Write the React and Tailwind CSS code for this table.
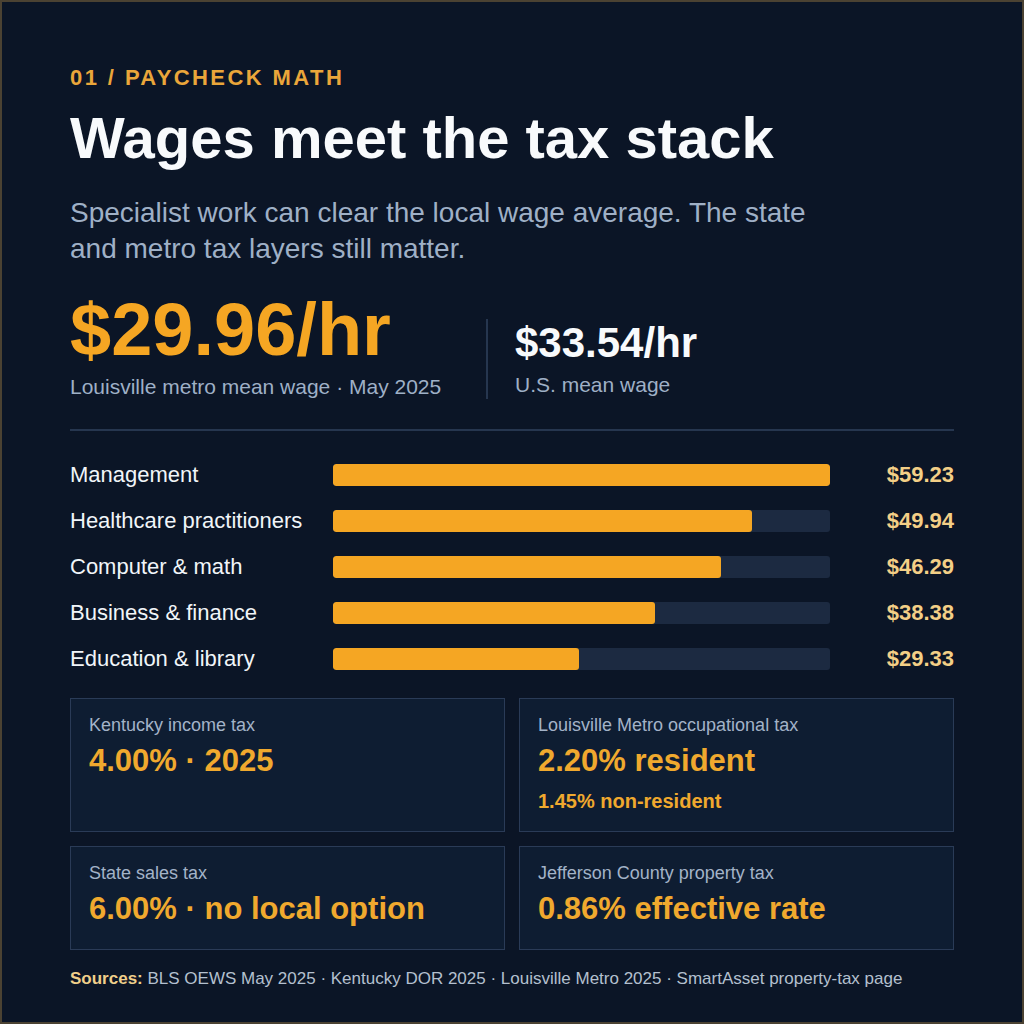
const bars = [
  { label: 'Management', value: 59.23 },
  { label: 'Healthcare practitioners', value: 49.94 },
  { label: 'Computer & math', value: 46.29 },
  { label: 'Business & finance', value: 38.38 },
  { label: 'Education & library', value: 29.33 },
];

const MAX = 59.23;

function TaxCard({ label, value, sub }) {
  return (
    <div className="bg-[#0e1d32] border border-[#2a3b57] px-[18px] pt-[14px]">
      <div className="text-[18px] leading-[24px] text-[#a3b3c8]">{label}</div>
      <div className="mt-[6px] text-[31px] leading-[36px] font-bold text-[#f0a92e]">{value}</div>
      {sub && (
        <div className="mt-[8px] text-[20px] leading-[28px] font-bold text-[#f0a92e]">{sub}</div>
      )}
    </div>
  );
}

export default function App() {
  return (
    <div
      className="w-[1024px] h-[1024px] bg-[#0b1526] border-2 border-[#4b4232] px-[68px] pt-[62px] overflow-hidden"
      style={{ fontFamily: "'Liberation Sans', Arial, sans-serif" }}
    >
      {/* Header */}
      <div className="text-[22px] leading-[28px] font-bold tracking-[0.11em] text-[#eaa63a]">
        01 / PAYCHECK MATH
      </div>
      <h1 className="mt-[13px] text-[58px] leading-[66px] font-bold text-[#f8fafc]">
        Wages meet the tax stack
      </h1>
      <p className="mt-[24px] max-w-[770px] text-[28px] leading-[36px] text-[#9fb0c6]">
        Specialist work can clear the local wage average. The state and metro tax layers still matter.
      </p>

      {/* Headline stats */}
      <div className="mt-[25px] flex items-start">
        <div className="w-[416px]">
          <div className="text-[74px] leading-[76px] font-bold text-[#f5a623]">$29.96/hr</div>
          <div className="mt-[5px] text-[21px] leading-[28px] text-[#9fb0c6]">
            Louisville metro mean wage · May 2025
          </div>
        </div>
        <div className="mt-[27px] h-[80px] border-l-2 border-[#26364f] pl-[27px]">
          <div className="text-[42px] leading-[48px] font-bold text-[#f8fafc]">$33.54/hr</div>
          <div className="mt-[4px] text-[21px] leading-[28px] text-[#9fb0c6]">U.S. mean wage</div>
        </div>
      </div>

      <div className="mt-[28px] h-[2px] bg-[#26364f]" />

      {/* Occupation bars */}
      <div className="mt-[27px] flex flex-col gap-[18px]">
        {bars.map((b) => (
          <div key={b.label} className="grid grid-cols-[263px_497px_1fr] items-center h-[28px]">
            <div className="text-[22px] text-[#f1f5f9]">{b.label}</div>
            <div className="h-[22px] rounded-[3px] bg-[#1c2a41] overflow-hidden">
              <div
                className="h-full rounded-[3px] bg-[#f5a623]"
                style={{ width: `${(b.value / MAX) * 100}%` }}
              />
            </div>
            <div className="text-right text-[22px] font-bold text-[#f3cf86]">${b.value.toFixed(2)}</div>
          </div>
        ))}
      </div>

      {/* Tax cards */}
      <div className="mt-[28px] grid grid-cols-2 grid-rows-[134px_104px] gap-[14px]">
        <TaxCard label="Kentucky income tax" value="4.00% · 2025" />
        <TaxCard
          label="Louisville Metro occupational tax"
          value="2.20% resident"
          sub="1.45% non-resident"
        />
        <TaxCard label="State sales tax" value="6.00% · no local option" />
        <TaxCard label="Jefferson County property tax" value="0.86% effective rate" />
      </div>

      <p className="mt-[17px] text-[17px] leading-[24px] text-[#b4c0cf]">
        <span className="font-bold text-[#f0cf8a]">Sources:</span> BLS OEWS May 2025 · Kentucky DOR 2025 · Louisville Metro 2025 · SmartAsset property-tax page
      </p>
    </div>
  );
}
